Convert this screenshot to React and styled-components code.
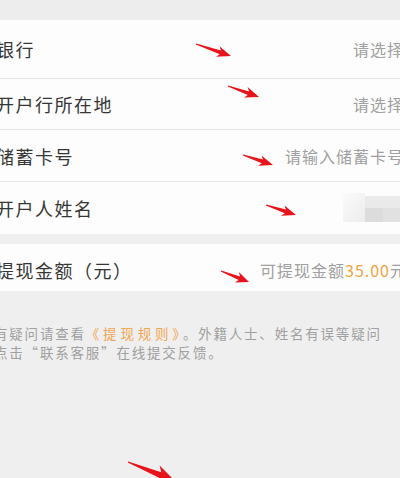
import React from "react";
import styled, { createGlobalStyle } from "styled-components";

const Global = createGlobalStyle`
  html, body { margin: 0; padding: 0; background: #efefef; }
  body { width: 400px; height: 478px; overflow: hidden; font-family: "Noto Sans CJK SC", "Noto Sans", sans-serif; }
  * { box-sizing: border-box; }
`;

const Page = styled.div`
  position: relative;
  width: 400px;
  height: 478px;
  overflow: hidden;
  background: #efefef;
`;

const TopBand = styled.div`
  height: 20px;
  background: #ededed;
`;

const Group = styled.div`
  background: #fdfdfd;
`;

const Row = styled.div`
  height: ${(p) => p.$h}px;
  display: flex;
  align-items: center;
  justify-content: space-between;
  margin: 0 -4px 0 -4px;
  border-bottom: ${(p) => (p.$line ? "1px solid #e6e6e6" : "none")};
  padding-top: ${(p) => p.$nudge || 0}px;
`;

const Label = styled.span`
  font-size: 18px;
  letter-spacing: 1.5px;
  color: #363636;
  white-space: nowrap;
`;

const Hint = styled.span`
  font-size: 16px;
  letter-spacing: 1px;
  color: #a0a0a0;
  white-space: nowrap;
  margin-right: ${(p) => p.$over || 0}px;
`;

const Amount = styled.span`
  color: #f0a443;
`;

const Gap = styled.div`
  height: ${(p) => p.$h}px;
`;

const Note = styled.div`
  margin: 33px 0 0 -6px;
  font-size: 13.5px;
  letter-spacing: 1.8px;
  line-height: 19px;
  color: #a0a0a0;
  white-space: nowrap;
`;

const NoteLine = styled.div``;

const Link = styled.span`
  color: #f3a652;
  letter-spacing: 3.8px;
`;

const Overlay = styled.svg`
  position: absolute;
  left: 0;
  top: 0;
  pointer-events: none;
`;

const Mosaic = () => (
  <svg width="61" height="30" viewBox="0 0 61 30">
    <defs>
      <linearGradient id="mg" x1="0" y1="0" x2="1" y2="1">
        <stop offset="0" stopColor="#fbfbfb" />
        <stop offset="1" stopColor="#ececec" />
      </linearGradient>
    </defs>
    <rect x="0" y="0" width="22" height="29" fill="url(#mg)" />
    <rect x="22" y="3" width="39" height="12" fill="#eaeaea" />
    <rect x="22" y="15" width="18" height="14" fill="#dcdcdc" />
    <rect x="40" y="15" width="21" height="14" fill="#e1e1e1" />
  </svg>
);

const arrowPoints = (x1, y1, x2, y2, L, W) => {
  const dx = x2 - x1;
  const dy = y2 - y1;
  const len = Math.hypot(dx, dy);
  const ux = dx / len;
  const uy = dy / len;
  const nx = -uy;
  const ny = ux;
  const bx = x2 - ux * L;
  const by = y2 - uy * L;
  const nkx = x2 - ux * L * 0.8;
  const nky = y2 - uy * L * 0.8;
  const s = W * 0.35;
  const pts = [
    [x1 + nx * 0.6, y1 + ny * 0.6],
    [nkx + nx * s, nky + ny * s],
    [bx + nx * W, by + ny * W],
    [x2, y2],
    [bx - nx * W, by - ny * W],
    [nkx - nx * s, nky - ny * s],
    [x1 - nx * 0.6, y1 - ny * 0.6],
  ];
  return pts.map((p) => p.map((v) => v.toFixed(1)).join(",")).join(" ");
};

const arrows = [
  [196, 44, 231, 56, 14, 5.5],
  [228, 86, 259, 97, 14, 5.5],
  [243, 155, 273, 165, 14, 5.5],
  [266, 205, 296, 215, 14, 5.5],
  [221, 271, 249, 282, 13, 5.5],
  [128, 462, 175, 481, 20, 8.5],
];

const rows = [
  { label: "银行", hint: "请选择", h: 59 },
  { label: "开户行所在地", hint: "请选择", h: 51 },
  { label: "储蓄卡号", hint: "请输入储蓄卡号", h: 52 },
];

export default function App() {
  return (
    <Page>
      <Global />
      <TopBand />
      <Group>
        {rows.map((r) => (
          <Row key={r.label} $h={r.h} $line>
            <Label>{r.label}</Label>
            <Hint>{r.hint}</Hint>
          </Row>
        ))}
        <Row $h={52}>
          <Label>开户人姓名</Label>
          <Mosaic />
        </Row>
      </Group>
      <Gap $h={10} />
      <Group>
        <Row $h={47} $nudge={4}>
          <Label>提现金额（元）</Label>
          <Hint $over={-3}>
            可提现金额<Amount>35.00</Amount>元
          </Hint>
        </Row>
      </Group>
      <Note>
        <NoteLine>
          有疑问请查看<Link>《提现规则》</Link>。外籍人士、姓名有误等疑问
        </NoteLine>
        <NoteLine>点击“联系客服”在线提交反馈。</NoteLine>
      </Note>
      <Overlay width="400" height="478" viewBox="0 0 400 478">
        {arrows.map((a, i) => (
          <polygon key={i} points={arrowPoints(...a)} fill="#e8141b" />
        ))}
      </Overlay>
    </Page>
  );
}
